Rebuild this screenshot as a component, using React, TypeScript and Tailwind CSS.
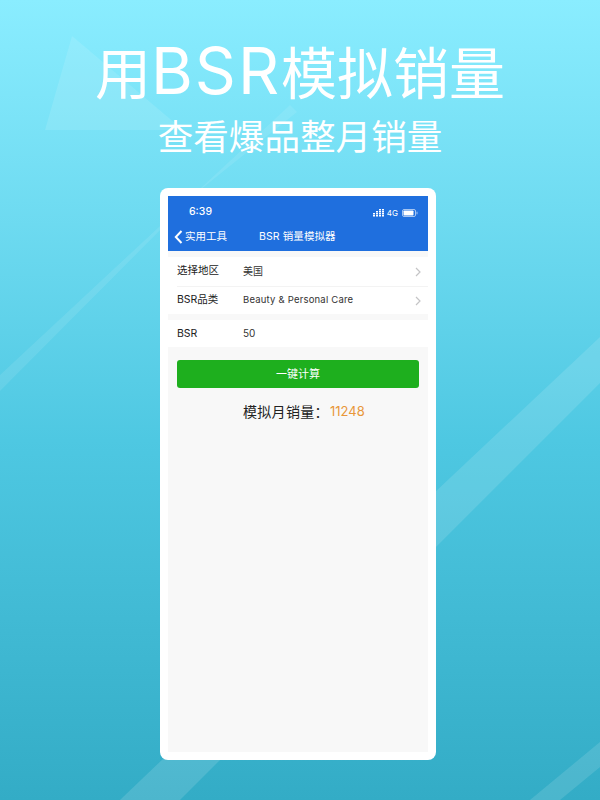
import React from "react";

const F = "font-['Inter','Noto_Sans_CJK_SC',sans-serif]";

function Chevron() {
  return (
    <svg width="6" height="10" viewBox="0 0 6 10" className="mr-[7px] shrink-0">
      <path d="M1 1l4 4-4 4" fill="none" stroke="#c4c4c6" strokeWidth="1.2" />
    </svg>
  );
}

function Row({ label, value, arrow, h, valueClass, labelClass }: { label: string; value: string; arrow?: boolean; h: string; valueClass?: string; labelClass?: string }) {
  return (
    <div className={`flex items-center pl-[9px] ${h}`}>
      <div className={`w-[66px] shrink-0 text-[10.5px] leading-none text-[#222] ${labelClass ?? ""}`}>{label}</div>
      <div className={`flex-1 -mt-[1px] leading-none text-[#333] ${valueClass ?? "text-[10px]"}`}>{value}</div>
      {arrow && <Chevron />}
    </div>
  );
}

const dots = [
  [0, 4], [0, 6],
  [3, 2], [3, 4], [3, 6],
  [6, 0], [6, 2], [6, 4], [6, 6],
  [9, 0], [9, 2], [9, 4], [9, 6],
];

export default function App() {
  return (
    <div className={`relative w-[600px] h-[800px] overflow-hidden bg-gradient-to-b from-[#8aedff] via-[#4ec8e2] via-55% to-[#33acc6] ${F}`}>
      <svg width="600" height="800" viewBox="0 0 600 800" className="absolute inset-0">
        <polygon points="72,36 45,130 183,130" fill="#ffffff" opacity="0.11" />
        <polygon points="0,375 290,105 297,112 200,190 0,391" fill="#ffffff" opacity="0.09" />
        <polygon points="600,337 400,525 400,583 600,383" fill="#ffffff" opacity="0.12" />
        <polygon points="120,800 165,757 223,757 180,800" fill="#ffffff" opacity="0.13" />
        <polygon points="530,800 600,742 600,767 560,800" fill="#ffffff" opacity="0.12" />
      </svg>
      <div className="relative flex flex-col items-center">
        <h1 className="mt-[38px] h-[66px] text-[56px] leading-[66px] font-normal text-white whitespace-nowrap">
          用<span className="text-[64px] font-normal tracking-[2px]">BSR</span>模拟销量
        </h1>
        <h2 className="mt-[13px] h-[42px] text-[35.6px] leading-[42px] font-normal text-white whitespace-nowrap">
          查看爆品整月销量
        </h2>
        <div className="mt-[29px] mr-[4px] w-[276px] h-[572px] rounded-[8px] bg-white p-[8px]">
          <div className="flex h-full flex-col bg-[#f8f8f8]">
            <div className="h-[55px] bg-[#1f6fde] text-white">
              <div className="flex h-[31px] items-end justify-between pl-[21px] pr-[10px] pb-[10px]">
                <span className="text-[10.5px] leading-none font-medium">6:39</span>
                <div className="flex items-center gap-[3px]">
                  <svg width="11" height="8" viewBox="0 0 11 8">
                    <g fill="#fff">
                      {dots.map(([x, y]) => (
                        <rect key={`${x}-${y}`} x={x} y={y} width="2" height="1.5" />
                      ))}
                    </g>
                  </svg>
                  <span className="text-[8px] leading-none">4G</span>
                  <svg width="16" height="8" viewBox="0 0 16 8" className="ml-[1px]">
                    <rect x="0.5" y="0.5" width="13" height="7" rx="1.5" fill="none" stroke="#ffffff" strokeOpacity="0.6" />
                    <rect x="1.5" y="1.5" width="10" height="5" rx="0.7" fill="#fff" />
                    <rect x="14.5" y="2.7" width="1" height="2.6" fill="#ffffff" opacity="0.6" />
                  </svg>
                </div>
              </div>
              <div className="flex h-[20px] items-center pl-[6px]">
                <svg width="9" height="14" viewBox="0 0 9 14" className="shrink-0">
                  <path d="M7.5 1L1.8 7l5.7 6" fill="none" stroke="#fff" strokeWidth="2" />
                </svg>
                <span className="ml-[2px] w-[74px] shrink-0 text-[10.5px] leading-none">实用工具</span>
                <span className="text-[10.5px] leading-none tracking-[0.1px]">BSR 销量模拟器</span>
              </div>
            </div>
            <div className="mt-[6px] bg-white">
              <Row label="选择地区" value="美国" arrow h="h-[29px]" />
              <div className="ml-[9px] h-px bg-[#f3f3f3]" />
              <Row label="BSR品类" value="Beauty & Personal Care" arrow h="h-[27px]" valueClass="text-[9.5px] tracking-[0.2px]" />
            </div>
            <div className="mt-[6px] bg-white">
              <Row label="BSR" value="50" h="h-[27px]" valueClass="text-[10px]" labelClass="mt-[1px]" />
            </div>
            <div className="mx-[9px] mt-[13px] flex h-[28px] items-center justify-center rounded-[3px] bg-[#1eaf1e] text-[11px] leading-none text-white">
              一键计算
            </div>
            <div className="mt-[15px] flex items-center pl-[75px] text-[14px] leading-[17px] text-[#222]">
              <span className="w-[87px] shrink-0 tracking-[0.3px]">模拟月销量：</span>
              <span className="text-[#e8973a] text-[13px]">11248</span>
            </div>
          </div>
        </div>
      </div>
    </div>
  );
}
